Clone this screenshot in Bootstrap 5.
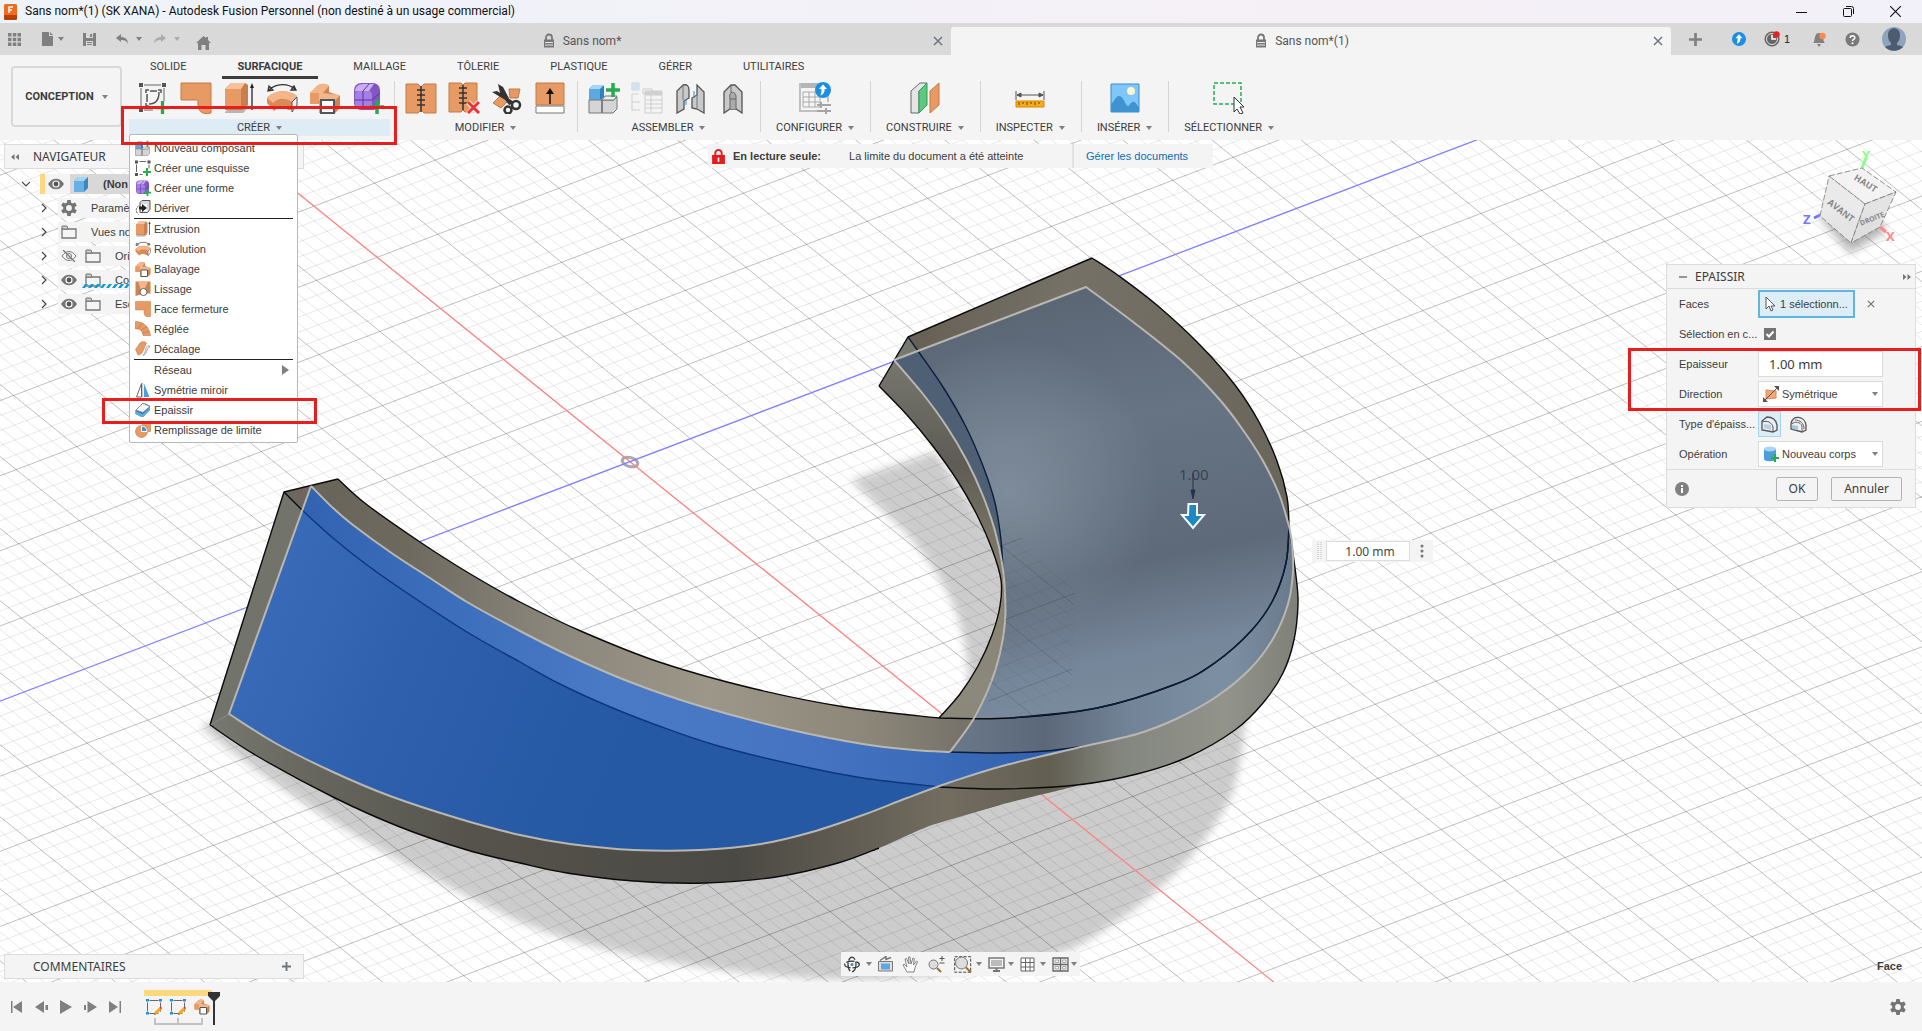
<!DOCTYPE html>
<html lang="fr">
<head>
<meta charset="utf-8">
<meta name="viewport" content="width=device-width, initial-scale=1">
<title>Sans nom*(1) (SK XANA) - Autodesk Fusion Personnel</title>
<link href="https://cdn.jsdelivr.net/npm/bootstrap@5.3.0/dist/css/bootstrap.min.css" rel="stylesheet">
<style>
:root{--panel:#f4f4f4;--ink:#3c3c3c;--grey:#808080;--mark:#e81e1e}
body{font-family:"Liberation Sans",Arial,sans-serif;font-size:11px;line-height:16px;color:var(--ink);background:var(--panel);overflow:hidden}
button{color:inherit;font:inherit;background:none;border:0;padding:0}
svg{display:block;flex:none}
a{text-decoration:none}
.caps{font-family:Roboto,"Liberation Sans",sans-serif}
.arial{font-family:"Liberation Sans",Arial,sans-serif}
.human{font-family:"Noto Sans","Open Sans",sans-serif}
.titlebar{height:23px;background:linear-gradient(90deg,#eef3fa,#f5f0f6 70%,#f2f0f8);color:#111;font:12px/23px Roboto,"Noto Sans",sans-serif}
.winbtns{gap:36px;margin-right:21px}
.tabbar{height:32px;background:#d9d9d9;color:#808080}
.quick{width:231px;flex:none}
.doctab{flex:1 1 0;font:12px/16px Roboto,sans-serif;color:#555;height:28px;margin-top:4px}
.doctab.current{background:var(--panel);border-radius:3px 3px 0 0}
.tabtools{width:251px;flex:none;padding-left:18px}
.ribbon{height:85px;background:var(--panel)}
.workspace{width:111px;height:61px;margin:11px 0 0 11px;border:2px solid #d8d8d8;border-radius:4px;font-weight:700}
.rtabs{gap:19px;padding-left:5px}
.rtabs button{padding:4px 16px 1px;height:24px;border-bottom:3px solid transparent}
.rtabs button.current{font-weight:700;border-bottom-color:#3c3c3c}
.tgroup{position:relative;padding:0 11px;height:61px}
.tgroup.slim{padding:0 16px}
.tgroup.first{padding:0 10px 0 8px}
.tgroup+.tgroup::before{content:"";position:absolute;left:0;top:2px;height:51px;border-left:1px solid #d4d4d4}
.tools{gap:11px;padding-top:3px}
.glabel{height:17px;margin-top:5px;width:100%;gap:6px}
.first .glabel{background:#ddecf5;margin-left:-8px;margin-right:-6px;width:261px}
.caret{display:inline-block;border:3px solid transparent;border-top:4px solid #808080;border-bottom:0}
.redmark{position:absolute;border:3px solid var(--mark);pointer-events:none;z-index:30}
.mark-create{left:-8px;top:27px;width:276px;height:39px}
.mark-thicken{left:-32px;right:-24px;top:-2px;height:26px}
.mark-values{left:-39px;right:-6px;top:-1px;height:63px}
.flyout{position:absolute;left:0;top:55px;width:169px;background:#fff;border:1px solid #b8b8b8;border-radius:2px;padding:3px 4px 2px;z-index:20}
.flyout button{position:relative;height:20px;padding-left:1px;width:100%;gap:3px}
.flyout hr{margin:0;border:0;border-top:1px solid #222;opacity:1}
.stage{position:relative;background:#fff;overflow:hidden}
.scene{position:absolute;inset:0;width:100%;height:100%}
.floating{position:absolute;background:var(--panel);border:1px solid #dcdcdc}
.notice{position:absolute;top:4px;left:708px;width:505px;height:24px;background:var(--panel)}
.notice .cell{border-left:2px solid #e2e2e2;height:24px;width:141px}
.notice a{color:#0a6cb5}
.browser{position:absolute;left:4px;top:4px;width:300px}
.bhead{height:25px;background:var(--panel);border:1px solid #dcdcdc;font-size:12px}
.brow{height:20px;margin-top:4px;width:230px}
.brow .fill{background:var(--panel);height:20px}
.brow .twist{width:43px;margin-right:11px}
.comments{left:4px;bottom:3px;width:300px;height:25px;font-size:12px}
.dialog{right:6px;top:124px;width:250px;height:244px}
.dhead{height:24px;border-bottom:1px solid #dcdcdc;font-size:12px}
.drow{height:30px;padding-left:12px}
.drow .lab{width:79px;white-space:nowrap}
.picker{width:97px;height:28px;background:#dcedf6;border:2px solid #5fb5de}
.field{width:125px;height:26px;background:#fff;border:1px solid #dadada}
.field input,.field select{border:0;background:none;outline:0;appearance:none;color:inherit;width:100%;padding:0}
.field input{font-size:13px;padding-left:10px;height:24px}
.tick{appearance:none;width:12px;height:12px;margin:0 0 0 6px;background:#747474 url("data:image/svg+xml,%3Csvg xmlns='http://www.w3.org/2000/svg' viewBox='0 0 12 12'%3E%3Cpath d='M2.5 6l2.5 2.500 4.500-5' fill='none' stroke='white' stroke-width='2'/%3E%3C/svg%3E")}
.typebtn{width:23px;height:26px;border:1px solid transparent}
.typebtn.on{background:#dcedf6;border-color:#a5d5ec}
.dfoot{height:37px;border-top:1px solid #dcdcdc;padding-top:1px}
.dfoot button{height:24px;border:1px solid #b4b4b4;border-radius:2px;font-size:12px}
.valuebox{position:absolute;left:1312px;top:400px;width:121px;height:22px;background:var(--panel)}
.valuebox input{width:84px;height:20px;border:1px solid #ddd;background:#fff;text-align:center;color:#444;font-size:12px;padding:0 0 0 4px}
.navbarx{position:absolute;left:841px;bottom:6px;width:239px;height:24px;background:var(--panel)}
.selinfo{position:absolute;right:20px;bottom:8px;font-weight:700}
.timeline{height:49px;background:var(--panel);color:#808080}
.player{gap:12px;margin-left:3px}
.history{margin-left:23px}
</style>
<script src="https://cdn.jsdelivr.net/npm/bootstrap@5.3.0/dist/js/bootstrap.bundle.min.js"></script>
</head>
<body class="d-flex flex-column vh-100">

<svg width="0" height="0" class="position-absolute" aria-hidden="true">
<defs>
<symbol id="plus" viewBox="0 0 12 12"><path d="M4.500 0h3v4.500H12v3H7.500V12h-3V7.500H0v-3h4.500z" fill="#23ad4e"/></symbol>
<symbol id="i-sketch" viewBox="0 0 32 32"><g fill="#555"><path d="M2 1h4v4H2zM25 1h4v4h-4zM2 26h4v4H2z"/></g><path d="M4 6v19M7 3h17M27 6v13M7 28h9" stroke="#666" fill="none"/><path d="M9 11V8h3M21 8h3v3M9 21v3h3M13 9h7M22 10c0 8-4 12-10 12M10 12v8" stroke="#555" fill="none" stroke-width="1.500"/><use href="#plus" x="19" y="19" width="13" height="13"/></symbol>
<symbol id="i-sketchs" viewBox="0 0 32 32"><g fill="#555"><path d="M0 1h6v6H0zM25 1h6v6h-6zM0 26h6v6H0z"/></g><path d="M3 9v15M9 3h13M28 9v8M9 29h6" stroke="#666" fill="none" stroke-width="2"/><use href="#plus" x="16" y="16" width="16" height="16"/></symbol>
<symbol id="i-patch" viewBox="0 0 32 32"><path d="M1 1h30v30c-9 2-14-1-13-13H1z" fill="#e79a63" stroke="#c27a48"/></symbol>
<symbol id="i-extrude" viewBox="0 0 32 32"><path d="M2 30l6-5h18l-6 6H2z" fill="#b5b5b5"/><path d="M2 7l6-6h14l3 2v20l-5 5H2z" fill="#c97f4d"/><path d="M2 7l6-6h14l-4 6z" fill="#f6c29b"/><path d="M2 7h16v20H2z" fill="#e79a63"/><path d="M29 28V5" stroke="#222" stroke-width="1.300"/><path d="M27 6l2-5 2 5z" fill="#222"/></symbol>
<symbol id="i-revolve" viewBox="0 0 32 32"><path d="M3 8C10 1 22 1 29 7M2 9l1-5 4 4zM30 8l-5 0 3-4z" stroke="#333" fill="none" stroke-width="1.300"/><path d="M1 16C8 8 22 7 31 14l-4 5v9l-5 0c-4-3-9-3-14 1L1 21z" fill="#d98a55"/><path d="M1 16C8 8 22 7 31 14l-5 6C18 15 12 16 7 21z" fill="#f4b58a"/><path d="M26 20l5-5v8l-5 7z" fill="#eee" stroke="#555"/></symbol>
<symbol id="i-sweep" viewBox="0 0 32 32"><path d="M1 11l7-7c4-3 8-3 12 0v6l11 4v12l-5 5H10v-9H1z" fill="#cf8350"/><path d="M1 11l7-7c4-3 8-3 12 0l-6 7 17 2-5 6H10l-1-6z" fill="#f4b58a"/><path d="M1 11h9v9h9v11H10v-9H1z" fill="#e79a63"/><path d="M12 18h13v13H12z" fill="#fff" stroke="#555" stroke-width="2"/></symbol>
<symbol id="i-form" viewBox="0 0 32 32"><rect x="2" y="1" width="26" height="27" rx="7" fill="#8256c4"/><path d="M3 10c0-5 3-8 8-8h11l-5 7H4z" fill="#c9aef2"/><rect x="3" y="9" width="17" height="18" rx="4" fill="#a67fe3"/><path d="M11 9v18M3 18h17M11 9l6-7M20 18l8-7" stroke="#5d35a0" fill="none"/><use href="#plus" x="18" y="18" width="14" height="14"/></symbol>
<symbol id="i-stitch" viewBox="0 0 32 32"><path d="M1 2h12l3 3 3-3h12v29H19l-3-3-3 3H1z" fill="#e79a63" stroke="#c27a48"/><path d="M16 4v26M12 8h8M12 13h8M12 18h8M12 23h8" stroke="#333" stroke-width="1.500"/></symbol>
<symbol id="i-unstitch" viewBox="0 0 32 32"><path d="M1 1h12l2 2 2-2h12v29H17l-2-2-2 2H1z" fill="#e79a63" stroke="#c27a48"/><path d="M15 3v25M11 6h8M11 11h8M11 16h8M11 21h8" stroke="#333" stroke-width="1.500"/><path d="M20 20l11 12M31 20L20 32" stroke="#f4f4f4" stroke-width="5"/><path d="M20 20l11 11M31 20L20 31" stroke="#f03232" stroke-width="3"/></symbol>
<symbol id="i-trim" viewBox="0 0 32 32"><path d="M18 7h11l-2 9h-8zM2 21l7-7 8 5-7 7z" fill="#e79a63" stroke="#c27a48"/><path d="M7 2l5 3 9 17-3 1L9 11zM1 10l5-1 17 11-2 2z" fill="#333"/><circle cx="25" cy="23" r="4" fill="none" stroke="#333" stroke-width="2.500"/><circle cx="17" cy="28" r="3.500" fill="none" stroke="#333" stroke-width="2.500"/></symbol>
<symbol id="i-extend" viewBox="0 0 32 32"><path d="M2 1h28v22H2z" fill="#e79a63" stroke="#c27a48"/><path d="M2 24h28v7H2z" fill="#fff" stroke="#777"/><path d="M16 22V11" stroke="#111" stroke-width="1.500"/><path d="M12 12l4-6 4 6z" fill="#111"/></symbol>
<symbol id="i-comp" viewBox="0 0 32 32"><path d="M1 7l4-4h10l1 1v11l-3 3H1z" fill="#2e82bd"/><path d="M1 7l4-4h11l-4 4z" fill="#a6d6f5"/><path d="M1 7h11v11H1z" fill="#5ca9e0"/><path d="M1 18h13v13H1zM14 18h12l3-3v12l-4 4H14z" fill="#d5d5d5" stroke="#777"/><path d="M14 18l3-4h12l-3 4zM14 18v13" fill="#eee" stroke="#777"/><use href="#plus" x="18" y="1" width="14" height="14"/></symbol>
<symbol id="i-table" viewBox="0 0 32 32" ><g fill="none" stroke="#cfcfcf"><path d="M1 1h7v7H1zM1 12h6M1 12v17M1 20h8M1 28h8M12 7h9v5h-9z"/><path d="M14 9h17v22H14zM14 13h17M14 18h17M14 22h17M14 26h17M20 13v18"/></g><path d="M1 1h7v7H1z" fill="#cfe3f2"/><path d="M14 9h17v4H14z" fill="#d0d0d0"/></symbol>
<symbol id="i-joint" viewBox="0 0 32 32"><path d="M3 9l6-6c4-1 6 1 6 5v8l-5 3v8l-7 4zM30 31l-7-4-5-1v-10l5-3V3l7 7z" fill="#c9c9c9" stroke="#555" stroke-width="1.300"/><path d="M9 3v15M23 13v14" stroke="#777"/><path d="M12 17v6M20 9v7" stroke="#2e8fd0"/></symbol>
<symbol id="i-asbuilt" viewBox="0 0 32 32"><path d="M7 10l7-7h4l7 7v21l-6-4h-6l-6 4z" fill="#c9c9c9" stroke="#555" stroke-width="1.300"/><path d="M13 27V17h6v10M13 17c-2-9 7-9 6 0M14 3v8" fill="#aaa" stroke="#666"/></symbol>
<symbol id="upcircle" viewBox="0 0 16 16"><circle cx="8" cy="8" r="8" fill="#1c8fe3"/><path d="M8 2.500L4 7h2.500c0 2.500-.5 4.500-1 6.500 3-1 4.200-3.500 4.200-6.500H12z" fill="#fff"/></symbol>
<symbol id="i-config" viewBox="0 0 32 32"><path d="M1 1h28v5H1z" fill="#b5b5b5"/><path d="M1 1v28h18M29 6v14" stroke="#c0c0c0" fill="none" stroke-width="2"/><path d="M4 10h17v15H4zM4 15h17M4 20h17M10 10v15M16 10v15" stroke="#aaa" fill="none"/><path d="M18 23h14M22 20v6M18 29h14M27 26v6" stroke="#a5a5a5" stroke-width="2"/><use href="#upcircle" x="16" y="0" width="16" height="16"/></symbol>
<symbol id="i-plane" viewBox="0 0 32 32"><path d="M2 9l9-8h7l-8 8v22H2z" fill="#e5e5e5" stroke="#666"/><path d="M10 9l8-8v22l-8 8z" fill="#5fc780" stroke="#2c9d54"/><path d="M21 9l9-8v22l-9 8z" fill="#e79a63" stroke="#c27a48"/></symbol>
<symbol id="i-measure" viewBox="0 0 32 32"><path d="M2 9v9M30 9v9M3 13h26M3 13l4-2v4zM29 13l-4-2v4z" stroke="#555" fill="#555"/><path d="M2 19h28v6H2z" fill="#fbac13" stroke="#d08a00"/><path d="M5 20v3M9 20v2M13 20v3M17 20v2M21 20v3M25 20v2" stroke="#5a4100"/></symbol>
<symbol id="i-picture" viewBox="0 0 32 32"><path d="M2 2h28v28H2z" fill="#7fc6fa" stroke="#3c8dc8"/><circle cx="22" cy="9" r="4" fill="#fdf5cf"/><path d="M2 22c3-2 5-8 8-8 5 0 6 10 9 10 2 0 3-5 6-4 3 1 3 4 5 5v5H2z" fill="#3e93d0"/></symbol>
<symbol id="i-select" viewBox="0 0 32 32"><path d="M1 1h27v21H1z" fill="none" stroke="#23ad4e" stroke-width="1.500" stroke-dasharray="4 2"/><path d="M21 15v15l3-3 3 5 3-1-3-6h4z" fill="#fff" stroke="#333"/></symbol>
<symbol id="i-derive" viewBox="0 0 32 32"><path d="M10 5l4-4h16v18l-5 6H10z" fill="#d8d8d8" stroke="#555" stroke-width="2"/><path d="M12 8h12v15H12z" fill="#fff"/><path d="M14 8l10 8-10 8v-5H8v-6h6z" fill="#222"/><path d="M7 12c-6 4-6 12 0 17" stroke="#555" stroke-width="2" stroke-dasharray="4 2" fill="none"/></symbol>
<symbol id="i-loft" viewBox="0 0 32 32"><path d="M1 1h30v24H18L1 30z" fill="#cf8350"/><path d="M6 1h20l-8 18h-6z" fill="#f4b58a"/><circle cx="17" cy="22" r="7" fill="#fff" stroke="#666" stroke-width="2"/></symbol>
<symbol id="i-ruled" viewBox="0 0 32 32"><path d="M1 1c16 0 27 10 30 28H16C15 20 10 15 1 16z" fill="#e79a63" stroke="#b36d3c"/><path d="M6 16L14 4M12 19L24 11M15 24l14-3" stroke="#b36d3c"/></symbol>
<symbol id="i-offset" viewBox="0 0 32 32"><path d="M1 17L10 4c4-4 10-3 13 0L14 24c-3 2-6 4-8 4z" fill="#e79a63" stroke="#b36d3c"/><path d="M16 29c8-1 7-15 14-18l-4-2c-7 4-4 16-10 20z" fill="#eee" stroke="#666"/></symbol>
<symbol id="i-mirror" viewBox="0 0 32 32"><path d="M13 3v27H3z" fill="#fff" stroke="#666" stroke-width="2"/><path d="M18 3v27h11z" fill="#4d9ed8"/><path d="M15.500 1v30" stroke="#777"/></symbol>
<symbol id="i-thick" viewBox="0 0 32 32"><path d="M1 18L15 4c4-3 10 1 15 4v8L16 30c-5 0-9-4-15-6z" fill="#2e82bd"/><path d="M1 17L15 3c5 0 10 4 15 6L16 21C10 20 7 17 1 17z" fill="#f5f5f5" stroke="#666" stroke-width="1.500"/><path d="M1 19c7 0 9 5 15 5l14-14v6L16 30c-5 0-9-4-15-6z" fill="#5ca9e0"/></symbol>
<symbol id="i-fill" viewBox="0 0 32 32"><path d="M15 1h16v18H15z" fill="#e79a63" stroke="#b36d3c"/><circle cx="13" cy="19" r="12" fill="#e79a63" stroke="#b36d3c"/><path d="M13 19V8c7 0 11 5 11 11z" fill="#3e93d0" stroke="#fff" stroke-width="2"/></symbol>
<symbol id="i-lock" viewBox="0 0 12 14"><path d="M3 7V4a3 3 0 016 0v3" fill="none" stroke="#777" stroke-width="1.800"/><path d="M1 6h10v8H1z" fill="#777"/><path d="M2 9h8M2 11.500h8" stroke="#e8e8e8"/></symbol>
<symbol id="i-x" viewBox="0 0 10 10"><path d="M1 1l8 8M9 1L1 9" stroke="currentColor" stroke-width="1.500" fill="none"/></symbol>
<symbol id="i-cross" viewBox="0 0 12 12"><path d="M6 0v12M0 6h12" stroke="currentColor" stroke-width="2.500"/></symbol>
<symbol id="i-eye" viewBox="0 0 16 12"><path d="M0 6c4-7 12-7 16 0-4 7-12 7-16 0z" fill="#747474"/><circle cx="8" cy="6" r="3.600" fill="#fff"/><circle cx="8" cy="6" r="2.400" fill="#555"/></symbol>
<symbol id="i-noeye" viewBox="0 0 16 12"><path d="M1 6c4-6 10-6 14 0-4 6-10 6-14 0z" fill="none" stroke="#777"/><circle cx="8" cy="6" r="2.500" fill="none" stroke="#777"/><path d="M2 0l12 12" stroke="#777" stroke-width="1.300"/></symbol>
<symbol id="i-folder" viewBox="0 0 16 14"><path d="M1 4h14v9H1z" fill="none" stroke="#777" stroke-width="1.300"/><path d="M1 1h5l1 3H1z" fill="#ccc" stroke="#777"/></symbol>
<symbol id="i-gear" viewBox="0 0 16 16"><g fill="#747474"><circle cx="8" cy="8" r="5.800"/><path id="tooth" d="M6.300 0h3.400l.6 4H5.700zM6.300 16h3.400l.6-4H5.700z"/><use href="#tooth" transform="rotate(60 8 8)"/><use href="#tooth" transform="rotate(120 8 8)"/></g><circle cx="8" cy="8" r="2.900" fill="#f4f4f4"/></symbol>
<symbol id="i-chev" viewBox="0 0 6 10"><path d="M1 1l4 4-4 4" fill="none" stroke="#444" stroke-width="1.200"/></symbol>
<symbol id="i-tlsk" viewBox="0 0 16 16"><path d="M1.500 1.500h13v13h-13z" fill="none" stroke="#666" stroke-dasharray="9 4" stroke-dashoffset="-2"/><path d="M0 0h3v2.500H0zM13 0h3v2.500h-3zM0 13h3v2.500H0z" fill="#1c8fe3"/><path d="M8 16l1-3.500 5-4.500 2 2-5 5z" fill="#f6a71a"/><path d="M8 16l.6-2 1.400 1.300zM9 12.500l2 2" fill="#666"/><path d="M13.500 8.500L15 7.500l1 1.500-1 1.500z" fill="#e33"/></symbol>
</defs>
</svg>

<header class="titlebar d-flex align-items-center ps-1">
<svg width="13" height="16" viewBox="0 0 13 16"><path d="M1 0h11l1 1v14l-1 1H1l-1-1V1z" fill="#f26a1b"/><path d="M0 11h13v4l-1 1H1l-1-1z" fill="#b5400a"/><path d="M5 9V3h4M5 6h3" stroke="#fff" stroke-width="1.500" fill="none"/></svg>
<span class="ms-2 flex-grow-1">Sans nom*(1) (SK XANA) - Autodesk Fusion Personnel (non destiné à un usage commercial)</span>
<div class="winbtns d-flex align-items-center">
<button aria-label="Réduire"><svg width="11" height="12" viewBox="0 0 11 12"><path d="M0 6.500h11" stroke="#111"/></svg></button>
<button aria-label="Restaurer"><svg width="11" height="11" viewBox="0 0 11 11" fill="none" stroke="#111"><rect x=".5" y="2.500" width="8" height="8" rx="1"/><path d="M3 .5h5.500a2 2 0 012 2V8"/></svg></button>
<button aria-label="Fermer"><svg width="11" height="11" viewBox="0 0 10 10"><path d="M0 0l10 10M10 0L0 10" stroke="#111"/></svg></button>
</div>
</header>

<nav class="tabbar d-flex align-items-stretch">
<div class="quick d-flex align-items-center ps-2" aria-label="Accès rapide">
<button aria-label="Panneau de données"><svg width="13" height="13" viewBox="0 0 13 13" fill="#808080"><path d="M0 0h3.500v3.500H0zM4.800 0h3.500v3.500H4.800zM9.500 0H13v3.500H9.500zM0 4.800h3.500v3.500H0zM4.800 4.800h3.500v3.500H4.800zM9.500 4.800H13v3.500H9.500zM0 9.500h3.500V13H0zM4.800 9.500h3.500V13H4.800zM9.500 9.500H13V13H9.500z"/></svg></button>
<button class="d-flex align-items-center gap-1 ms-3 ps-1" aria-label="Fichier"><svg width="13" height="14" viewBox="0 0 13 14"><path d="M1 0h7v4h4v10H1zM9 0l3 3H9z" fill="#808080"/></svg><span class="caret"></span></button>
<button class="ms-3" style="padding-left:3px" aria-label="Enregistrer"><svg width="13" height="13" viewBox="0 0 13 13"><path d="M0 0h13v13H0z" fill="#808080"/><path d="M3 0h7v5H3zM3 8h7v5H3z" fill="#d9d9d9"/><path d="M7 1h2v3H7zM4 9h5v1H4zM4 11h5v1H4z" fill="#808080"/></svg></button>
<button class="d-flex align-items-center gap-2 ms-3 ps-1" aria-label="Annuler"><svg width="12" height="10" viewBox="0 0 12 10"><path d="M0 4l5-4v3c4 0 7 2 7 7-1-3-3-4-7-4v2z" fill="#808080"/></svg><span class="caret"></span></button>
<button class="d-flex align-items-center gap-2 ms-2 ps-1 opacity-50" aria-label="Rétablir"><svg width="12" height="10" viewBox="0 0 12 10"><path d="M12 4L7 0v3C3 3 0 5 0 10c1-3 3-4 7-4v2z" fill="#808080"/></svg><span class="caret"></span></button>
<button class="ms-3 mt-2" aria-label="Accueil"><svg width="15" height="14" viewBox="0 0 15 14"><path d="M7.500 0L0 7h2v7h3.500V9h4v5H13V7h2l-3-3V1h-2v1z" fill="#808080"/></svg></button>
</div>
<div class="doctab d-flex align-items-center"><span class="flex-grow-1 d-flex justify-content-center gap-2"><svg width="12" height="15"><use href="#i-lock"/></svg>Sans nom*</span><button class="me-2 text-secondary" aria-label="Fermer l’onglet"><svg width="10" height="10"><use href="#i-x"/></svg></button></div>
<div class="doctab current d-flex align-items-center"><span class="flex-grow-1 d-flex justify-content-center gap-2"><svg width="12" height="15"><use href="#i-lock"/></svg>Sans nom*(1)</span><button class="me-2 text-secondary" aria-label="Fermer l’onglet"><svg width="10" height="10"><use href="#i-x"/></svg></button></div>
<div class="tabtools d-flex align-items-center">
<button aria-label="Nouvel onglet"><svg width="13" height="13"><use href="#i-cross"/></svg></button>
<button class="ms-4" style="padding-left:6px" aria-label="Mises à jour"><svg width="14" height="14"><use href="#upcircle"/></svg></button>
<button class="ms-3 d-flex align-items-center gap-1" style="padding-left:2px" aria-label="État des travaux : 1"><svg width="16" height="16" viewBox="0 0 16 16"><circle cx="8" cy="8" r="7" fill="#777" stroke="#555"/><circle cx="8" cy="8" r="5.500" fill="#666" stroke="#ddd"/><path d="M8 4v4h4" stroke="#fff" fill="none" stroke-width="1.500"/><circle cx="12.500" cy="3.500" r="3.300" fill="#e02424"/></svg><span class="text-dark">1</span></button>
<button style="margin-left:22px" aria-label="Notifications"><svg width="14" height="15" viewBox="0 0 14 15"><path d="M7 1c4 0 4 5 5 9l1 1H1l1-1c1-4 1-9 5-9zM5 12h4l-2 3z" fill="#808080"/><circle cx="10.500" cy="4" r="3.200" fill="#ff8a4d"/></svg></button>
<button style="margin-left:19px" aria-label="Aide"><svg width="15" height="15" viewBox="0 0 15 15"><circle cx="7.500" cy="7.500" r="7" fill="#7a7a7a"/><path d="M5.200 6c0-3 4.600-3 4.600-.3C9.800 7.500 7.500 7.300 7.500 9" fill="none" stroke="#fff" stroke-width="1.500"/><circle cx="7.500" cy="11.300" r="1" fill="#fff"/></svg></button>
<button style="margin-left:22px" aria-label="Compte"><svg width="24" height="24" viewBox="0 0 24 24"><circle cx="12" cy="12" r="12" fill="#8fa3bd"/><path d="M6 8c0-9 12-9 12 0 0 4-1 6-3 8v2c3 1 5 1 6 2-5 5-13 5-18 0 1-1 3-1 6-2v-2C7 14 6 12 6 8z" fill="#4d5b70"/></svg></button>
</div>
</nav>

<div class="ribbon caps d-flex">
<button class="workspace d-flex align-items-center justify-content-center gap-2">CONCEPTION <span class="caret"></span></button>
<div style="padding-left:7px">
<div class="rtabs d-flex align-items-stretch" role="tablist">
<button role="tab">SOLIDE</button><button role="tab" class="current">SURFACIQUE</button><button role="tab">MAILLAGE</button><button role="tab">TÔLERIE</button><button role="tab">PLASTIQUE</button><button role="tab">GÉRER</button><button role="tab">UTILITAIRES</button>
</div>
<div class="d-flex" id="groups"></div>
</div>
</div>

<main class="stage flex-grow-1">
<svg class="scene" viewBox="0 140 1922 842" preserveAspectRatio="xMidYMid slice" aria-label="Vue 3D">
<defs>
<filter id="soft" x="-5%" y="-5%" width="110%" height="110%"><feGaussianBlur stdDeviation="4"/></filter>
<filter id="haze" x="-50%" y="-50%" width="200%" height="200%"><feGaussianBlur stdDeviation="5"/></filter>
<linearGradient id="gTop" gradientUnits="userSpaceOnUse" x1="330" y1="0" x2="960" y2="0"><stop offset="0" stop-color="#6a655b"/><stop offset=".12" stop-color="#6e695f"/><stop offset=".35" stop-color="#8b867b"/><stop offset=".6" stop-color="#9d9789"/><stop offset=".85" stop-color="#8d8779"/><stop offset="1" stop-color="#77736a"/></linearGradient>
<linearGradient id="gBottom" gradientUnits="userSpaceOnUse" x1="210" y1="0" x2="1085" y2="0"><stop offset="0" stop-color="#777870"/><stop offset=".12" stop-color="#66665f"/><stop offset=".3" stop-color="#55534c"/><stop offset=".6" stop-color="#4b4943"/><stop offset=".72" stop-color="#5f5b52"/><stop offset=".84" stop-color="#736d60"/><stop offset=".96" stop-color="#625e52"/><stop offset="1" stop-color="#72726a"/></linearGradient>
<linearGradient id="gRing" gradientUnits="userSpaceOnUse" x1="940" y1="0" x2="1298" y2="0"><stop offset="0" stop-color="#736d60"/><stop offset=".3" stop-color="#625e52"/><stop offset=".5" stop-color="#83867e"/><stop offset=".8" stop-color="#92948c"/><stop offset="1" stop-color="#7f8078"/></linearGradient>
<linearGradient id="gBlue" gradientUnits="userSpaceOnUse" x1="230" y1="580" x2="620" y2="740"><stop offset="0" stop-color="#3b6dbb"/><stop offset=".5" stop-color="#2d5fac"/><stop offset="1" stop-color="#2659a4"/></linearGradient>
<linearGradient id="gStrip" gradientUnits="userSpaceOnUse" x1="300" y1="0" x2="1080" y2="0"><stop offset="0" stop-color="#3163b2"/><stop offset=".4" stop-color="#4a7ac5"/><stop offset=".65" stop-color="#4674c2"/><stop offset="1" stop-color="#2f60ad"/></linearGradient>
<linearGradient id="gSteel" gradientUnits="userSpaceOnUse" x1="1030" y1="300" x2="1120" y2="740"><stop offset="0" stop-color="#5b6675"/><stop offset=".3" stop-color="#677483"/><stop offset=".62" stop-color="#5e6a79"/><stop offset=".82" stop-color="#76869a"/><stop offset="1" stop-color="#7f8fa0"/></linearGradient>
<radialGradient id="gGlow" gradientUnits="userSpaceOnUse" cx="1010" cy="490" r="150"><stop offset="0" stop-color="#8493a1" stop-opacity=".8"/><stop offset="1" stop-color="#8493a1" stop-opacity="0"/></radialGradient>
<linearGradient id="gArc" gradientUnits="userSpaceOnUse" x1="960" y1="0" x2="1295" y2="0"><stop offset="0" stop-color="#6a7788"/><stop offset=".25" stop-color="#5b6879"/><stop offset=".5" stop-color="#728397"/><stop offset=".8" stop-color="#7d90a3"/><stop offset="1" stop-color="#69798b"/></linearGradient>
<linearGradient id="gInner" gradientUnits="userSpaceOnUse" x1="0" y1="340" x2="0" y2="750"><stop offset="0" stop-color="#7c7c74"/><stop offset=".3" stop-color="#5e5c54"/><stop offset=".6" stop-color="#88816f"/><stop offset=".85" stop-color="#8b897d"/><stop offset="1" stop-color="#8c8676"/></linearGradient>
<linearGradient id="gUp" gradientUnits="userSpaceOnUse" x1="910" y1="340" x2="1290" y2="430"><stop offset="0" stop-color="#665f54"/><stop offset=".35" stop-color="#757167"/><stop offset="1" stop-color="#6b665b"/></linearGradient>
<clipPath id="ghostClip"><path d="M998 515L1075 590 1072 690 1030 715 985 700 1005 620z"/></clipPath>
</defs>
<g id="shadow" fill="#000" fill-opacity=".2" filter="url(#soft)"></g>
<g id="grid" fill="none"></g>
<g id="body" fill="none" stroke-linejoin="round"></g>
<g clip-path="url(#ghostClip)" opacity=".6"><use href="#grid"/></g>
<text x="1179" y="480" font-size="15" font-family="Open Sans, sans-serif" fill="#18243a" fill-opacity=".65">1.00</text>
<path d="M1193 473v24M1191 490l2 9 2-9z" stroke="#26334a" fill="#26334a"/>
<path d="M1188.500 504h8.500v11h7l-11 13-11-13h6z" fill="#1e88c3" stroke="#f4f8fb" stroke-width="2"/>
<g id="viewcube">
<path d="M1818 215l32 38 36-22-8-14z" fill="#000" opacity=".3" filter="url(#haze)"/>
<path d="M1862 168l4-10" stroke="#8f8" stroke-width="3"/><path d="M1820 215l-6 3" stroke="#77f" stroke-width="3"/><path d="M1880 227l6 5" stroke="#f88" stroke-width="3"/>
<g stroke="#777" stroke-dasharray="6 2" stroke-width=".8" fill-opacity=".93"><path d="M1829 176l33-8 34 24-31 12z" fill="#f2f2f2"/><path d="M1829 176l36 28-14 39-31-27z" fill="#e8e8e8"/><path d="M1865 204l31-12-16 35-29 16z" fill="#e2e2e2"/></g>
<g font-family="Open Sans, sans-serif" font-weight="700" fill="#888" text-anchor="middle"><text font-size="9" transform="translate(1864 186) rotate(32)">HAUT</text><text font-size="9" transform="translate(1839 213) rotate(38)">AVANT</text><text font-size="7" transform="translate(1873 221) rotate(-22)">DROITE</text></g>
<g font-family="Open Sans, sans-serif" font-size="13" font-weight="700"><text x="1862" y="160" fill="#8f8">Y</text><text x="1803" y="224" fill="#77f">Z</text><text x="1886" y="241" fill="#f88">X</text></g>
</g>
</svg>

<section class="browser" aria-label="Navigateur">
<div class="bhead human d-flex align-items-center"><button style="margin-left:6px" aria-label="Réduire le navigateur"><svg width="8" height="6" viewBox="0 0 8 6"><path d="M3.500 0v6L0 3zM8 0v6L4.500 3z" fill="#777"/></svg></button><span style="margin-left:14px">NAVIGATEUR</span></div>
<div id="tree"></div>
</section>

<div class="notice d-flex align-items-center" role="alert">
<svg class="ms-1" width="13" height="15" viewBox="0 0 12 14"><path d="M3 7V4a3 3 0 016 0v3" fill="none" stroke="#e02020" stroke-width="1.800"/><path d="M0 5.500h12V14H0z" fill="#e02020"/><path d="M6 8v4" stroke="#fff" stroke-width="1.500"/></svg>
<strong class="ms-2">En lecture seule:</strong><span class="ms-4 ps-1 flex-grow-1">La limite du document a été atteinte</span>
<span class="cell d-flex align-items-center"><a href="#" class="ms-2 ps-1">Gérer les documents</a></span>
</div>

<section class="floating dialog human" aria-label="Epaissir">
<div class="dhead d-flex align-items-center"><svg class="ms-2 me-2 ps-1" width="12" height="10" viewBox="0 0 8 10"><path d="M0 5h8" stroke="#777" stroke-width="1.500"/></svg><span class="flex-grow-1">EPAISSIR</span><svg class="me-1" width="8" height="6" viewBox="0 0 8 6"><path d="M0 0v6l3.500-3zM4.500 0v6L8 3z" fill="#777"/></svg></div>
<div class="arial">
<div class="drow d-flex align-items-center"><span class="lab">Faces</span><button class="picker d-flex align-items-center ps-1 gap-1 text-nowrap overflow-hidden"><svg width="12" height="16" viewBox="0 0 12 16"><path d="M2 1v12l3-3 2 5 2-1-2-4h4z" fill="#fff" stroke="#555"/></svg>1 sélectionn...</button><button class="ms-2 ps-1 text-secondary" aria-label="Effacer la sélection"><svg width="8" height="8"><use href="#i-x"/></svg></button></div>
<div class="drow d-flex align-items-center"><label class="lab" for="chain">Sélection en c...</label><input class="tick" type="checkbox" id="chain" checked></div>
<div class="position-relative"><div class="redmark mark-values"></div>
<div class="drow d-flex align-items-center"><label class="lab" for="thk">Epaisseur</label><span class="field human"><input id="thk" value="1.00 mm"></span></div>
<div class="drow d-flex align-items-center"><label class="lab" for="dir">Direction</label><span class="field d-flex align-items-center pe-1"><svg class="ms-1" width="16" height="16" viewBox="0 0 16 16"><path d="M3 4l10 1v7L3 13z" fill="#f0a878" stroke="#d98a55"/><path d="M1 15L15 1" stroke="#555"/><path d="M0 16v-5l5 5zM16 0v5l-5-5z" fill="#555"/></svg><select id="dir" style="padding-left:3px"><option>Symétrique</option></select><span class="caret"></span></span></div></div>
<div class="drow d-flex align-items-center"><span class="lab">Type d'épaiss...</span><button class="typebtn on d-flex align-items-center justify-content-center" aria-label="Arêtes vives"><svg width="17" height="17" viewBox="0 0 17 17"><path d="M1 5l5-4c6 0 9 3 10 8v5l-4 2-11-2z" fill="#e8eef3" stroke="#555" stroke-width="1.300"/><path d="M1 6c6-2 10 1 11 5v5" fill="none" stroke="#555"/><path d="M3 8l7 1v5l-7-2z" fill="#b9d2e2"/></svg></button><button class="typebtn ms-2 d-flex align-items-center" aria-label="Arêtes arrondies"><svg width="17" height="17" viewBox="0 0 17 17"><path d="M1 8c1-10 14-8 15 1v5l-4 2-11-3z" fill="#eee" stroke="#555" stroke-width="1.300"/><path d="M2 8c2-3 9-2 10 2v5M5 4c5 0 9 3 9 9" fill="none" stroke="#666"/><path d="M2 9l6 1v4l-6-1z" fill="#a9c8de"/></svg></button></div>
<div class="drow d-flex align-items-center"><label class="lab" for="op">Opération</label><span class="field d-flex align-items-center pe-1"><svg class="ms-1" width="16" height="17" viewBox="0 0 16 17"><path d="M1 3v10c0 3 12 3 12 0V3z" fill="#4d9ed8"/><ellipse cx="7" cy="3" rx="6" ry="2.500" fill="#a6d6f5"/><use href="#plus" x="8" y="8" width="8" height="8"/></svg><select id="op" style="padding-left:3px"><option>Nouveau corps</option></select><span class="caret"></span></span></div>
</div>
<div class="dfoot d-flex align-items-center"><svg class="ms-2 me-auto" width="14" height="14" viewBox="0 0 14 14"><circle cx="7" cy="7" r="7" fill="#808080"/><path d="M7 6v5M7 3v2" stroke="#fff" stroke-width="2"/></svg><button style="width:42px">OK</button><button style="width:71px;margin:0 13px">Annuler</button></div>
</section>

<div class="valuebox human d-flex align-items-center"><svg class="mx-1" width="6" height="18" viewBox="0 0 6 18"><path d="M2 0v18M5 0v18" stroke="#bbb" stroke-dasharray="1 1"/></svg><input value="1.00 mm" aria-label="Epaisseur"><svg class="ms-2" width="10" height="16" viewBox="0 0 10 16" fill="#777"><circle cx="4" cy="3" r="1.500"/><circle cx="4" cy="8" r="1.500"/><circle cx="4" cy="13" r="1.500"/></svg></div>

<section class="floating comments human d-flex align-items-center"><span class="flex-grow-1 ps-4 ms-1">COMMENTAIRES</span><button class="me-2 pe-1 text-secondary" aria-label="Ajouter un commentaire"><svg width="9" height="9"><use href="#i-cross"/></svg></button></section>

<div class="navbarx d-flex align-items-center justify-content-between" style="padding:0 3px" role="toolbar" aria-label="Navigation">
<button aria-label="Orbite" class="d-flex align-items-center" style="gap:6px"><svg width="16" height="17" viewBox="0 0 16 16"><g fill="none" stroke="#333" stroke-width="1.200"><ellipse cx="8" cy="8" rx="4" ry="7.300" stroke-dasharray="9 2"/><ellipse cx="8" cy="8" rx="7.300" ry="3.300" stroke-dasharray="8 2"/></g><circle cx="8" cy="8" r="2.500" fill="#f4f4f4"/><circle cx="8" cy="8" r="1.600" fill="#3e93d0"/></svg><span class="caret"></span></button>
<button aria-label="Regarder"><svg width="15" height="16" viewBox="0 0 15 15"><path d="M2 4l6-4v3l5-2" stroke="#777" fill="none" stroke-width="1.500"/><path d="M.5 5h14v9.500H.5z" fill="#ddd" stroke="#777"/><path d="M3 7h9v6H3z" fill="#5ca9e0"/></svg></button>
<button aria-label="Panoramique" style="margin:0 3px"><svg width="17" height="17" viewBox="0 0 17 17"><path d="M5 16L1 9l1-1 3 3-2-8 1.500-.5L7 8l-.5-7H8l1 7 2-6 1.300.5L11.500 9l3-4 1 .7-2.500 6-1 4.300z" fill="#fafafa" stroke="#777" stroke-width=".9"/></svg></button>
<button aria-label="Zoom" style="margin-right:3px"><svg width="17" height="17" viewBox="0 0 17 17"><circle cx="5.500" cy="8.500" r="4.500" fill="#ddd" stroke="#777"/><path d="M9 12l4 4" stroke="#9b6a33" stroke-width="2"/><path d="M14 0v5M11.500 2.500h5M11.500 7h5" stroke="#555"/></svg></button>
<button aria-label="Ajuster" class="d-flex align-items-center gap-1"><svg width="18" height="17" viewBox="0 0 18 17"><path d="M.7.7h16v15.500H.7z" fill="none" stroke="#444" stroke-dasharray="3 1.500"/><circle cx="7.500" cy="7" r="6" fill="#ddd" stroke="#777"/><path d="M12 11.500l5 5" stroke="#9b6a33" stroke-width="2"/></svg><span class="caret"></span></button>
<button aria-label="Affichage" class="d-flex align-items-center" style="gap:3px"><svg width="17" height="15" viewBox="0 0 17 15"><path d="M1 1h15v10H1z" fill="#f4f4f4" stroke="#777" stroke-width="1.500"/><path d="M3 3h11v6H3z" fill="#bbb"/><path d="M5 14h7M8.500 11v3" stroke="#777" stroke-width="2"/></svg><span class="caret"></span></button>
<button aria-label="Grille" class="d-flex align-items-center" style="gap:5px"><svg width="15" height="15" viewBox="0 0 15 15"><path d="M1 1h13v13H1zM1 5.500h13M1 10h13M5.500 1v13M10 1v13" fill="#fff" stroke="#666"/></svg><span class="caret"></span></button>
<button aria-label="Fenêtres" class="d-flex align-items-center" style="gap:2px"><svg width="17" height="15" viewBox="0 0 17 15"><path d="M1 1h15v13H1zM1 7.500h15M8.500 1v13" fill="none" stroke="#666" stroke-width="1.300"/><path d="M3 3h3.500v2.500H3zM10.500 3H14v2.500h-3.500zM3 9.500h3.500V12H3zM10.500 9.500H14V12h-3.500z" fill="none" stroke="#aaa"/></svg><span class="caret"></span></button>
</div>
<span class="selinfo">Face</span>
</main>

<footer class="timeline d-flex align-items-center ps-2">
<div class="player d-flex align-items-center">
<button aria-label="Début"><svg width="12" height="12" viewBox="0 0 12 12"><path d="M0 0h1.500v12H0zM11 0v12L2 6z" fill="#808080"/></svg></button>
<button aria-label="Précédent"><svg width="13" height="12" viewBox="0 0 13 12"><path d="M9 0v12L0 6zM10.500 4H13v5h-2.500z" fill="#808080"/></svg></button>
<button aria-label="Lecture"><svg width="12" height="14" viewBox="0 0 12 14"><path d="M0 0l12 7-12 7z" fill="#808080"/></svg></button>
<button aria-label="Suivant"><svg width="13" height="12" viewBox="0 0 13 12"><path d="M3.500 0v12L13 6zM0 4h2v5H0z" fill="#808080"/></svg></button>
<button aria-label="Fin"><svg width="12" height="12" viewBox="0 0 12 12"><path d="M10.500 0H12v12h-1.500zM0 0v12l9-6z" fill="#808080"/></svg></button>
</div>
<svg class="history me-auto" width="80" height="36" viewBox="0 0 80 36"><path d="M0 1h68v6H0z" fill="#fdd87e"/><use href="#i-tlsk" x="2" y="10" width="16" height="16"/><use href="#i-tlsk" x="26" y="10" width="16" height="16"/><use href="#i-sweep" x="50" y="9" width="16" height="17"/><path d="M11 29v6h47v-6M34 29v6" fill="none" stroke="#c2c2c2" stroke-width="2"/><path d="M64 3h12v4l-5 5v24h-2V12l-5-5z" fill="#333"/></svg>
<button class="me-3" aria-label="Préférences"><svg width="16" height="16"><use href="#i-gear"/></svg></button>
</footer>

<script>
const icon = (n, w = 32, h = w) => `<svg width="${w}" height="${h}"><use href="#i-${n}"/></svg>`;

/* ribbon groups */
const groups = [
  ['CRÉER', ['sketch', 'patch', 'extrude', 'revolve', 'sweep', 'form'], 'first'],
  ['MODIFIER', ['stitch', 'unstitch', 'trim', 'extend'], ''],
  ['ASSEMBLER', ['comp', 'table', 'joint', 'asbuilt'], ''],
  ['CONFIGURER', ['config'], 'slim'], ['CONSTRUIRE', ['plane'], 'slim'],
  ['INSPECTER', ['measure'], 'slim'], ['INSÉRER', ['picture'], 'slim'], ['SÉLECTIONNER', ['select'], 'slim']
];
const menu = [['comp', 'Nouveau composant'], ['sketchs', 'Créer une esquisse'], ['form', 'Créer une forme'], ['derive', 'Dériver'], 0,
  ['extrude', 'Extrusion'], ['revolve', 'Révolution'], ['sweep', 'Balayage'], ['loft', 'Lissage'], ['patch', 'Face fermeture'], ['ruled', 'Réglée'], ['offset', 'Décalage'], 0,
  ['', 'Réseau'], ['mirror', 'Symétrie miroir'], ['thick', 'Epaissir'], ['fill', 'Remplissage de limite']];
const flyout = `<div class="flyout arial" role="menu">` + menu.map(m => !m ? '<hr>' :
  `<button role="menuitem" class="d-flex align-items-center text-start">${m[0] ? icon(m[0], 16) : '<span class="ps-3"></span>'}<span class="flex-grow-1">${m[1]}</span>${m[1] === 'Réseau' ? '<svg class="me-1" width="7" height="10" viewBox="0 0 7 10"><path d="M0 0l7 5-7 5z" fill="#808080"/></svg>' : ''}${m[1] === 'Epaissir' ? '<span class="redmark mark-thicken"></span>' : ''}</button>`).join('') + '</div>';
document.getElementById('groups').innerHTML = groups.map(([t, ic, c]) =>
  `<div class="tgroup ${c}"><div class="tools d-flex justify-content-center">${ic.map(n => `<button aria-label="${n}">${icon(n)}</button>`).join('')}</div>
   <button class="glabel d-flex align-items-center justify-content-center">${t} <span class="caret"></span></button>${c === 'first' ? flyout + '<div class="redmark mark-create"></div>' : ''}</div>`).join('');

/* browser tree */
const row = (eye, ic, text, extra = '') => `<div class="brow d-flex align-items-center"><span class="twist d-flex justify-content-end">${icon('chev', 6, 10)}</span>
 <span class="fill d-flex align-items-center flex-grow-1 position-relative" style="padding-left:3px">${eye ? icon(eye, 16, 12) + '<span class="ps-2"></span>' : ''}${icon(ic, 16, ic === 'gear' ? 16 : 14)}<span style="margin-left:14px">${text}</span>${extra}</span></div>`;
document.getElementById('tree').innerHTML =
 `<div class="brow d-flex align-items-center" style="margin-top:5px"><svg style="margin:0 10px 0 18px" width="8" height="6" viewBox="0 0 8 6"><path d="M0 1l4 4 4-4" fill="none" stroke="#444" stroke-width="1.200"/></svg><span style="width:5px;height:20px;background:#fdd87e"></span><span class="fill d-flex align-items-center justify-content-center" style="width:25px;padding-right:4px">${icon('eye', 16, 12)}</span><span class="fill d-flex align-items-center flex-grow-1" style="background:#d8d8d8;padding-left:4px"><svg width="14" height="15" viewBox="0 0 14 15"><path d="M0 4l4-4h10v11l-4 4H0z" fill="#3f86bf"/><path d="M0 4l4-4h10l-4 4z" fill="#a6d6f5"/><path d="M0 4h10v11H0z" fill="#66b0e6"/></svg><strong class="text-nowrap" style="margin-left:15px">(Non enregistré)</strong></span></div>`
 + row('', 'gear', 'Paramètres') + row('', 'folder', 'Vues nommées') + row('noeye', 'folder', 'Origine')
 + row('eye', 'folder', 'Corps', `<svg class="position-absolute" style="left:24px;bottom:2px" width="60" height="4"><path d="${[...Array(10)].map((_, i) => `M${i * 6} 4l3-4h3l-3 4z`).join('')}" fill="#0b9bd8"/></svg>`) + row('eye', 'folder', 'Esquisses');

/* ground grid: orthographic, five minor cells per major cell */
const O = [630, 461.7], R = [63.2, 51.1], B = [60.6, -23.03];
const fan = (step, dir, pick) => { let d = ''; for (let k = -160; k <= 160; k++) { if (!pick(k)) continue; const x = O[0] + step[0] * k / 5, y = O[1] + step[1] * k / 5;
  d += `M${(x - dir[0] * 40).toFixed(1)} ${(y - dir[1] * 40).toFixed(1)}L${(x + dir[0] * 40).toFixed(1)} ${(y + dir[1] * 40).toFixed(1)}`; } return d; };
const minor = k => k % 5, major = k => k && k % 5 === 0, axis = k => k === 0;
document.getElementById('grid').innerHTML =
 `<path d="${fan(B, R, minor)}${fan(R, B, minor)}" stroke="#000" stroke-opacity=".09"/>
  <path d="${fan(B, R, major)}${fan(R, B, major)}" stroke="#000" stroke-opacity=".25"/>
  <ellipse cx="630" cy="462" rx="8" ry="4.500" transform="rotate(15 630 462)" stroke="#aaa" stroke-width="3"/>
  <path d="${fan(B, R, axis)}" stroke="#ff8080" stroke-width="1.300"/><path d="${fan(R, B, axis)}" stroke="#8080ff" stroke-width="1.300"/>`;

/* smooth curves through the model's edge points; runs of up to three points stay straight */
const line = (p, first = true) => { let d = (first ? 'M' : 'L') + p[0]; if (p.length < 4) return d + p.slice(1).map(q => 'L' + q).join('');
  for (let i = 0; i < p.length - 1; i++) { const a = p[i - 1] || p[i], b = p[i], c = p[i + 1], e = p[i + 2] || c;
  d += `C${b[0] + (c[0] - a[0]) / 6} ${b[1] + (c[1] - a[1]) / 6} ${c[0] - (e[0] - b[0]) / 6} ${c[1] - (e[1] - b[1]) / 6} ${c[0]} ${c[1]}`; } return d; };
const face = (...ps) => ps.map((p, i) => line(p, !i)).join('') + 'Z', rev = p => [...p].reverse();
const A = [284, 492], Bt = [338, 479], C = [210, 725], D = [229, 714], T = [311, 486], G = [908, 337], H = [879, 386], J = [894, 360], P = [1092, 258], Q = [1086, 287], X = [1289, 526];
const top1 = [Bt, [366, 504], [420, 542], [467, 572], [520, 602], [583, 632], [659, 662], [751, 688], [845, 707], [939, 718]];
const top2 = [[939, 718], [1010, 718], [1097, 708], [1176, 684], [1216, 662], [1251, 631], [1273, 600], [1286, 563], X];
const outR = [X, [1287, 497], [1277, 461], [1259, 422], [1235, 385], [1200, 345], [1158, 306], [1119, 276], P];
const mid1 = [T, [333, 508], [353, 525], [393, 554], [433, 580], [467, 602], [520, 631], [570, 656], [630, 682], [700, 706], [787, 729], [863, 744], [914, 750], [950, 752]];
const mid2 = [[950, 752], [998, 753], [1046, 751], [1085, 746]];
const mid3 = [[1085, 746], [1137, 734], [1176, 719], [1216, 697], [1251, 668], [1274, 637], [1288, 604], [1293, 572], [1292, 544], X];
const inR = [X, [1279, 494], [1263, 461], [1243, 430], [1220, 400], [1184, 363], [1137, 325], Q];
const low1 = [A, [302, 510], [333, 538], [367, 565], [410, 595], [467, 632], [520, 662], [560, 684], [608, 706], [659, 726], [715, 745], [787, 763], [863, 778], [940, 787]];
const low2 = [[940, 787], [998, 789], [1077, 785], [1137, 774], [1188, 757], [1235, 730], [1263, 703], [1283, 673], [1294, 640], [1298, 604], [1296, 576], X];
const lit = [D, [277, 744], [333, 772], [390, 796], [460, 819], [520, 835], [570, 844], [634, 850], [700, 850], [761, 844], [812, 832], [863, 815], [907, 798], [951, 782], [1006, 765], [1085, 746]];
const under = [C, [257, 756], [333, 797], [400, 827], [467, 850], [520, 863], [567, 873], [634, 881], [705, 883], [776, 877], [838, 863], [879, 848], [935, 824], [1000, 805], [1077, 786]];
const inner = [H, [907, 415], [932, 445], [957, 480], [977, 515], [992, 549], [1001, 580], [1000, 606], [992, 635], [978, 666], [960, 694], [939, 718]];
const innerL = [J, [923, 394], [947, 427], [967, 461], [983, 496], [995, 531], [1002, 563], [1005, 593], [1005, 622], [1000, 653], [990, 685], [973, 720], [950, 752]];
const innerD = [G, [918, 351], [943, 387], [965, 425], [983, 466], [995, 503], [1001, 540], [1003, 572]];
const f = (d, c) => `<path d="${d}" fill="${c}"/>`, s = (d, c, w = 1.4) => `<path d="${d}" stroke="${c}" stroke-width="${w}"/>`;
const K = '#0a0a0a', N = '#0b1d3c', W = '#b9b7b2';
document.getElementById('body').innerHTML =
 f(face([H, G, J], innerL, rev(inner)), 'url(#gInner)')
 + f(face([J, G, P], rev(outR), inR), 'url(#gUp)')
 + f(face(mid3, rev(low2), [[1000, 805], [935, 824], [907, 798]]), 'url(#gRing)')
 + f(face([Q, J], innerL, mid2, mid3, inR), 'url(#gSteel)')
 + f(face([Q, J], innerL, mid2, mid3, inR), 'url(#gGlow)')
 + f(face(top2, rev(mid3), rev(mid2), [[950, 752], [973, 719]]), 'url(#gArc)')
 + f(face(innerD, rev(innerL.slice(0, 6))), '#4f5f74') + f(`M${G}L${J}L918 351Z`, '#77786f')
 + f(face(top1, [[973, 720], [950, 752]], rev(mid1)), 'url(#gTop)')
 + f(`M${A}L${C}L${D}L${T}Z`, '#72736b') + f(`M${A}L${T}L302 510Z`, '#6e665f') + f(`M${T}L${Bt}L350 492L330 505Z`, '#6a655b')
 + f(face(lit, rev(under)), 'url(#gBottom)')
 + f(face(mid1, mid2, rev(lit)), 'url(#gBlue)')
 + f(face(mid1, mid2, [[1085, 746], [1006, 765], [940, 787]], rev(low1.slice(1))), 'url(#gStrip)')
 + s(line(top1) + line(top2) + line(inner), K) + s(`M${C}L${A}L${Bt}M${H}L${G}L${P}`, K) + s(line(outR) + line(low2) + line(under.slice(0, 12)), K)
 + s(line(low1.slice(1)), '#0d3580') + s(`M${A}L302 510`, K) + s(line(innerD) + line(mid2) + line(top2.slice(1)), N)
 + s(line(mid1) + line(lit) + `M${D}L${T}`, W, 2) + s(line(mid3) + line(inR) + `L${J}` + line(innerL), W, 2);
document.getElementById('shadow').innerHTML =
 `<path d="M851 480L935 452 1010 560 1000 700 968 690C970 620 945 580 905 532Z"/>
  <path d="M200 727C290 800 380 855 520 922 600 955 700 970 800 978 900 985 1010 972 1075 948 1140 912 1200 860 1231 797 1243 760 1246 730 1245 690L1000 760 700 850 400 800 240 710Z"/>`;
</script>
</body>
</html>
